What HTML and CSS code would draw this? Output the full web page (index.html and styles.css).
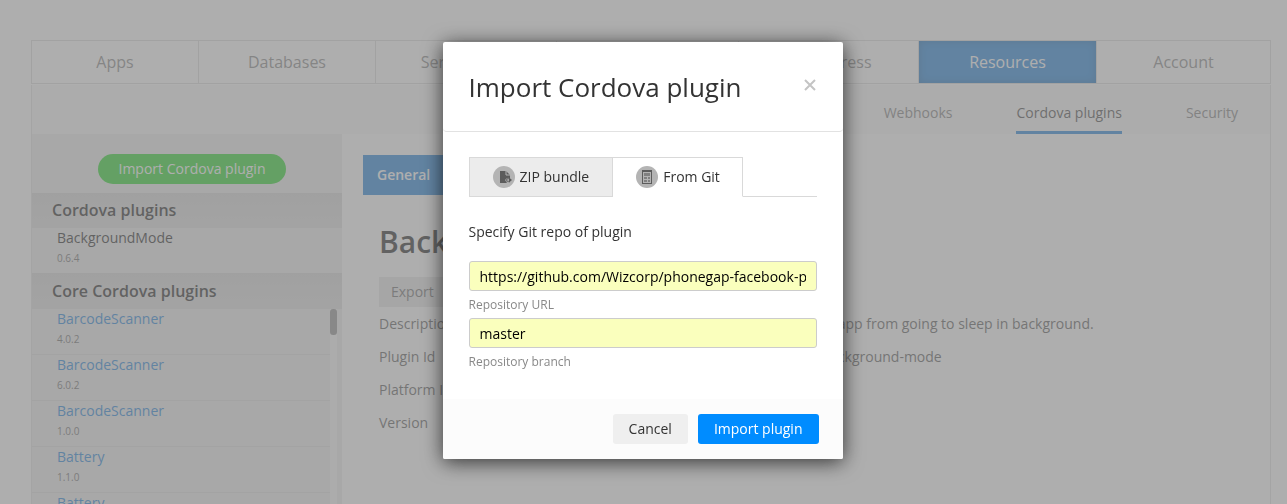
FILE: index.html
```html
<!DOCTYPE html>
<html lang="en">
<head>
    <meta charset="UTF-8">
    <meta name="viewport" content="width=device-width, initial-scale=1.0">
    <title>Cordova plugins</title>
    <link rel="stylesheet" href="styles.css">
</head>
<body>

    <div class="page">
        <nav class="main-nav">
            <a href="#">Apps</a>
            <a href="#">Databases</a>
            <a href="#">Server Code</a>
            <a href="#">Push</a>
            <a href="#">API Express</a>
            <a href="#" class="active">Resources</a>
            <a href="#">Account</a>
        </nav>

        <div class="workspace">
            <nav class="sub-nav">
                <a href="#">Webhooks</a>
                <a href="#" class="active">Cordova plugins</a>
                <a href="#">Security</a>
            </nav>

            <div class="columns">
                <aside class="sidebar">
                    <button type="button" class="import-button">Import Cordova plugin</button>
                    <h2>Cordova plugins</h2>
                    <ul class="plugin-list">
                        <li class="current"><a href="#">BackgroundMode</a><small>0.6.4</small></li>
                    </ul>
                    <h2>Core Cordova plugins</h2>
                    <div class="scroll-area">
                        <ul class="plugin-list">
                            <li><a href="#">BarcodeScanner</a><small>4.0.2</small></li>
                            <li><a href="#">BarcodeScanner</a><small>6.0.2</small></li>
                            <li><a href="#">BarcodeScanner</a><small>1.0.0</small></li>
                            <li><a href="#">Battery</a><small>1.1.0</small></li>
                            <li><a href="#">Battery</a></li>
                        </ul>
                        <div class="scroll-track"><div class="scroll-thumb"></div></div>
                    </div>
                </aside>

                <main class="content">
                    <a href="#" class="content-tab">General</a>
                    <div class="details">
                        <h1>BackgroundMode</h1>
                        <button type="button" class="export-button">Export</button>
                        <table>
                            <tr><th>Description</th><td>Cordova plugin to prevent the app from going to sleep in background.</td></tr>
                            <tr><th>Plugin Id</th><td>de.appplant.cordova.plugin.background-mode</td></tr>
                            <tr><th>Platform Id</th><td></td></tr>
                            <tr><th>Version</th><td>0.6.4</td></tr>
                        </table>
                    </div>
                </main>
            </div>
        </div>
    </div>

    <div class="backdrop"></div>

    <form class="modal" role="dialog" aria-labelledby="modalTitle">
        <header class="modal-header">
            <h3 id="modalTitle">Import Cordova plugin</h3>
            <button type="button" class="close" aria-label="Close">
                <svg width="12" height="12" viewBox="0 0 12 12"><path d="M1 1l10 10M11 1L1 11" stroke="#c4c4c4" stroke-width="2"/></svg>
            </button>
        </header>
        <div class="modal-body">
            <div class="tabs">
                <button type="button" class="tab">
                    <svg width="22" height="22" viewBox="0 0 22 22">
                        <circle cx="11" cy="11" r="11" fill="#b4b4b4"/>
                        <path d="M7 5h6l4 4v3h-3l-2 2 2 3H7z" fill="#5c5c5c"/>
                        <path d="M13 5v4h4" fill="none" stroke="#b4b4b4"/>
                        <path d="M16 12.500h-1a1.500 1.500 0 0 0 0 3h2" fill="none" stroke="#777" stroke-width="1.500"/>
                        <path d="M16 11.500l3 2.500-3 2.500z" fill="#5c5c5c"/>
                    </svg>
                    ZIP bundle
                </button>
                <button type="button" class="tab active">
                    <svg width="22" height="22" viewBox="0 0 22 22">
                        <circle cx="11" cy="11" r="11" fill="#b4b4b4"/>
                        <rect x="6" y="4" width="10" height="14" fill="#5c5c5c"/>
                        <rect x="7" y="6" width="8" height="11" fill="#b4b4b4"/>
                        <path d="M8 7h6v3H8zM8 11h3v2H8zM12 11h2v2h-2zM8 14h3v2H8zM12 14h2v2h-2z" fill="#808080"/>
                    </svg>
                    From Git
                </button>
            </div>
            <p>Specify Git repo of plugin</p>
            <input type="text" id="repoUrl" value="https://github.com/Wizcorp/phonegap-facebook-plugin.git">
            <label for="repoUrl">Repository URL</label>
            <input type="text" id="repoBranch" value="master">
            <label for="repoBranch">Repository branch</label>
        </div>
        <footer class="modal-footer">
            <button type="button" class="btn">Cancel</button>
            <button type="submit" class="btn primary">Import plugin</button>
        </footer>
    </form>

</body>
</html>
```

FILE: styles.css
```css
* {
    box-sizing: border-box;
}
body {
    margin: 0;
    font-family: "Open Sans", sans-serif;
    font-size: 14px;
    line-height: 20px;
    color: #333;
    background-color: #fff;
}
a {
    text-decoration: none;
}
button, input {
    font: inherit;
}
button {
    border: none;
    cursor: pointer;
}
.page {
    display: flex;
    flex-direction: column;
    height: 100vh;
    padding: 40px 16px 0 31px;
    overflow: hidden;
}

/* top navigation */
.main-nav {
    display: grid;
    grid-template-columns: 166fr 177fr 181fr 182fr 180fr 178fr 174fr;
    flex: none;
    border: 1px solid #dfdfdf;
}
.main-nav a {
    padding: 10px 0;
    font-size: 16px;
    line-height: 22px;
    text-align: center;
    color: #909090;
    border-left: 1px solid #dfdfdf;
}
.main-nav a:first-child {
    border-left: none;
}
.main-nav a.active {
    color: #fff;
    background-color: #318bdc;
    box-shadow: inset 0 0 8px rgba(0, 0, 0, 0.2);
}
.workspace {
    display: flex;
    flex-direction: column;
    flex: 1;
    min-height: 0;
    margin-top: 1px;
    border: solid #e4e4e4;
    border-width: 0 1px;
}
.sub-nav {
    display: flex;
    flex: none;
    justify-content: flex-end;
    gap: 64px;
    padding: 18px 32px 0;
    background-color: #f9f9f9;
}
.sub-nav a {
    padding-bottom: 8px;
    color: #888;
    border-bottom: 3px solid transparent;
}
.sub-nav a.active {
    color: #555;
    border-color: #318bdc;
}
.columns {
    display: flex;
    flex: 1;
    min-height: 0;
}

/* plugin list */
.sidebar {
    display: flex;
    flex-direction: column;
    flex: none;
    width: 310px;
    background-color: #eee;
}
.import-button {
    align-self: center;
    margin: 20px 0 9px 10px;
    padding: 5px 21px;
    color: #fff;
    background-color: #36da36;
    border-radius: 15px;
}
.sidebar h2 {
    flex: none;
    margin: 0;
    padding: 6px 20px 7px;
    font-size: 16px;
    font-weight: 600;
    line-height: 22px;
    color: #333;
    background: linear-gradient(#dadada, #e2e2e2);
}
.sidebar h2 ~ h2 {
    padding-top: 7px;
}
.plugin-list {
    flex: 1;
    margin: 0;
    padding: 0;
    list-style: none;
}
.plugin-list li {
    display: flex;
    flex-direction: column;
    height: 46px;
    padding-left: 25px;
    border-bottom: 1px solid #e2e2e2;
}
.plugin-list a {
    color: #318bdc;
}
.plugin-list small {
    font-size: 10px;
    color: #777;
}
.plugin-list .current {
    height: 45px;
    border-bottom: none;
}
.plugin-list .current a {
    color: #333;
}
.sidebar > .plugin-list {
    flex: none;
}
.scroll-area {
    display: flex;
    flex: 1;
    min-height: 0;
    padding-right: 5px;
    overflow: hidden;
}
.scroll-track {
    width: 7px;
    background-color: #fafafa;
}
.scroll-thumb {
    height: 26px;
    background-color: #999;
    border-radius: 3px;
}

/* plugin details */
.content {
    flex: 1;
    padding: 21px;
}
.content-tab {
    display: inline-block;
    padding: 10px 14px;
    font-weight: 600;
    color: #fff;
    background-color: #318bdc;
}
.details {
    padding: 27px 16px;
}
.details h1 {
    margin: 0 0 15px;
    font-size: 30px;
    font-weight: 600;
    line-height: 40px;
}
.export-button {
    padding: 5px 12px;
    color: #777;
    background-color: #e8e8e8;
}
.details table {
    width: 100%;
    border-collapse: collapse;
    color: #666;
}
.details th, .details td {
    padding: 7px 0 6px;
    font-weight: 400;
    text-align: left;
}
.details th {
    width: 260px;
}

/* import dialog */
.backdrop {
    position: fixed;
    inset: 0;
    background-color: rgba(127, 127, 127, 0.632);
}
.modal {
    position: fixed;
    top: 42px;
    left: calc(50% - 201px);
    width: 400px;
    background-color: #fff;
    border-radius: 2px;
    box-shadow: 0 3px 20px rgba(0, 0, 0, 0.7);
}
.modal-header {
    display: flex;
    justify-content: space-between;
    align-items: center;
    padding: 27px 27px 26px 26px;
    border-bottom: 1px solid #e2e2e2;
    border-radius: 4px;
}
.modal-header h3 {
    margin: 0;
    font-size: 26px;
    font-weight: 400;
    line-height: 36px;
}
.close {
    display: flex;
    padding: 0 0 4px;
    background: none;
}
.modal-body {
    padding: 25px 26px 24px;
}
.tabs {
    display: flex;
    border-bottom: 1px solid #d9d9d9;
}
.tab {
    display: flex;
    align-items: center;
    gap: 5px;
    height: 40px;
    margin-bottom: -1px;
    padding: 0 23px;
    color: #333;
    background-color: #ececec;
    border: 1px solid #d9d9d9;
}
.tab.active {
    padding: 0 22px 0 23px;
    background-color: #fff;
    border-left: none;
    border-bottom-color: #fff;
}
.modal-body p {
    margin: 25px 0 19px;
}
.modal-body input {
    display: block;
    width: 100%;
    height: 30px;
    padding: 0 10px;
    color: #000;
    background-color: #faffbd;
    border: 1px solid #ccc;
    border-radius: 3px;
}
.modal-body label {
    display: block;
    padding: 4px 0 3px;
    font-size: 12px;
    color: #888;
}
.modal-footer {
    display: flex;
    justify-content: flex-end;
    gap: 10px;
    padding: 15px 24px;
    background-color: #fcfcfc;
    border-radius: 0 0 2px 2px;
}
.btn {
    padding: 5px 16px;
    color: #333;
    background-color: #efefef;
    border-radius: 3px;
}
.btn.primary {
    color: #fff;
    background-color: #008cff;
}
```
